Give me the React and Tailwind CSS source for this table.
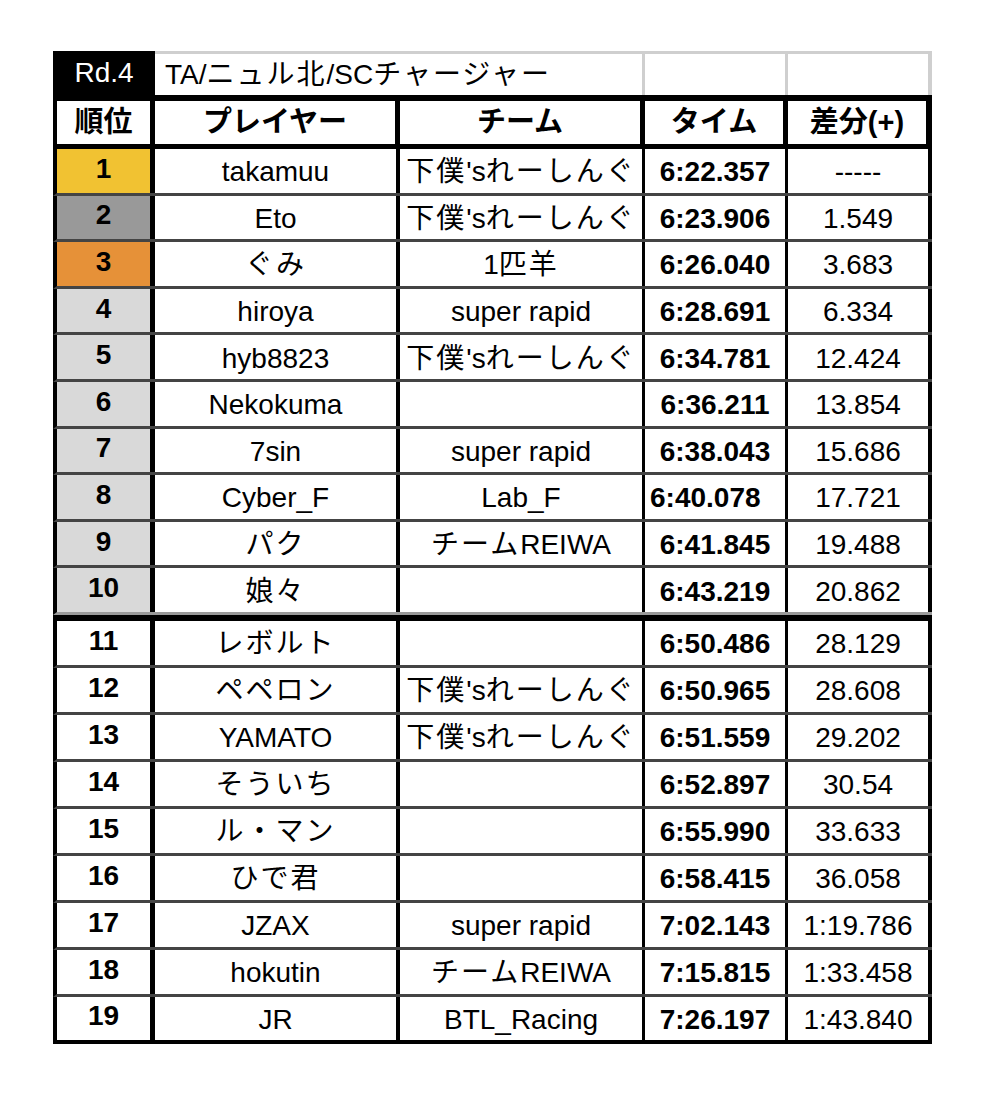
import React from 'react';

const TEAM_GEBOKU = "下僕'sれーしんぐ";

const rows = [
    { rank: 1, bg: 'bg-[#f1c232]', name: 'takamuu', team: TEAM_GEBOKU, time: '6:22.357', diff: '-----' },
    { rank: 2, bg: 'bg-[#999999]', name: 'Eto', team: TEAM_GEBOKU, time: '6:23.906', diff: '1.549' },
    { rank: 3, bg: 'bg-[#e69138]', name: 'ぐみ', team: '1匹羊', time: '6:26.040', diff: '3.683' },
    { rank: 4, bg: 'bg-[#d9d9d9]', name: 'hiroya', team: 'super rapid', time: '6:28.691', diff: '6.334' },
    { rank: 5, bg: 'bg-[#d9d9d9]', name: 'hyb8823', team: TEAM_GEBOKU, time: '6:34.781', diff: '12.424' },
    { rank: 6, bg: 'bg-[#d9d9d9]', name: 'Nekokuma', team: '', time: '6:36.211', diff: '13.854' },
    { rank: 7, bg: 'bg-[#d9d9d9]', name: '7sin', team: 'super rapid', time: '6:38.043', diff: '15.686' },
    { rank: 8, bg: 'bg-[#d9d9d9]', name: 'Cyber_F', team: 'Lab_F', time: '6:40.078', diff: '17.721', shifted: true },
    { rank: 9, bg: 'bg-[#d9d9d9]', name: 'パク', team: 'チームREIWA', time: '6:41.845', diff: '19.488' },
    { rank: 10, bg: 'bg-[#d9d9d9]', name: '娘々', team: '', time: '6:43.219', diff: '20.862' },
    { rank: 11, bg: 'bg-white', name: 'レボルト', team: '', time: '6:50.486', diff: '28.129' },
    { rank: 12, bg: 'bg-white', name: 'ペペロン', team: TEAM_GEBOKU, time: '6:50.965', diff: '28.608' },
    { rank: 13, bg: 'bg-white', name: 'YAMATO', team: TEAM_GEBOKU, time: '6:51.559', diff: '29.202' },
    { rank: 14, bg: 'bg-white', name: 'そういち', team: '', time: '6:52.897', diff: '30.54' },
    { rank: 15, bg: 'bg-white', name: 'ル・マン', team: '', time: '6:55.990', diff: '33.633' },
    { rank: 16, bg: 'bg-white', name: 'ひで君', team: '', time: '6:58.415', diff: '36.058' },
    { rank: 17, bg: 'bg-white', name: 'JZAX', team: 'super rapid', time: '7:02.143', diff: '1:19.786' },
    { rank: 18, bg: 'bg-white', name: 'hokutin', team: 'チームREIWA', time: '7:15.815', diff: '1:33.458' },
    { rank: 19, bg: 'bg-white', name: 'JR', team: 'BTL_Racing', time: '7:26.197', diff: '1:43.840' },
];

// kana/kanji runs are drawn a little wider than the latin text around them
const Mixed = ({ text }) => {
    const parts = text.match(/[\u3000-\u30ff\u4e00-\u9fff]+|[^\u3000-\u30ff\u4e00-\u9fff]+/g) || [];
    return (
        <>
            {parts.map((p, i) =>
                /[\u3000-\u30ff\u4e00-\u9fff]/.test(p)
                    ? <span key={i} className="tracking-[2px]">{p}</span>
                    : <span key={i}>{p}</span>
            )}
        </>
    );
};

const Row = ({ r }) => {
    let rowCls = 'h-[46.6px] border-b-[3px] border-b-[#444]';
    if (r.rank === 10) rowCls = 'h-[46.6px] border-b-[3px] border-b-[#9a9a9a]';
    if (r.rank === 11) rowCls = 'h-[53px] border-t-[6px] border-t-black border-b-[3px] border-b-[#444]';
    if (r.rank > 11) rowCls = 'h-[47px] border-b-[3px] border-b-[#444]';
    if (r.rank === 19) rowCls = 'h-[47px] border-b-[4px] border-b-black';

    return (
        <div className={`flex border-l-[4px] border-l-black ${rowCls}`}>
            <div className={`w-[98px] flex items-center justify-center pb-1 font-bold border-r-[5px] border-black ${r.bg}`}>
                {r.rank}
            </div>
            <div className="w-[245px] flex items-center justify-center pt-[3px] border-r-[4px] border-black whitespace-nowrap">
                <Mixed text={r.name} />
            </div>
            <div className="w-[245px] flex items-center justify-center pt-[3px] border-r-[3px] border-black whitespace-nowrap">
                <Mixed text={r.team} />
            </div>
            <div className={`w-[143px] flex items-center pt-[3px] font-bold border-r-[3px] border-black ${r.shifted ? 'justify-start pl-[5px]' : 'justify-center'}`}>
                {r.time}
            </div>
            <div className="w-[144px] flex items-center justify-center pt-[3px] border-r-[4px] border-black">
                {r.diff}
            </div>
        </div>
    );
};

const App = () => {
    return (
        <div
            className="min-h-screen bg-white text-black text-[28px] leading-none pt-[51px] pl-[53px]"
            style={{ fontFamily: '"Liberation Sans", "Noto Sans CJK JP", sans-serif' }}
        >
            <div className="w-[879px]">
                {/* title row */}
                <div className="flex h-[44px]">
                    <div className="w-[102px] bg-black text-white flex items-center justify-center">Rd.4</div>
                    <div className="w-[490px] flex items-center pl-[10px] border-t-[3px] border-r-[3px] border-[#cfcfcf] whitespace-nowrap">
                        <Mixed text="TA/ニュル北/SCチャージャー" />
                    </div>
                    <div className="w-[143px] border-t-[3px] border-r-[3px] border-[#cfcfcf]"></div>
                    <div className="w-[144px] border-t-[3px] border-r-[4px] border-[#cfcfcf]"></div>
                </div>

                {/* header row */}
                <div className="flex h-[54px] border-t-[6px] border-b-[5px] border-l-[4px] border-black font-bold text-[29px]">
                    <div className="w-[98px] flex items-center justify-center border-r-[5px] border-black">順位</div>
                    <div className="w-[245px] flex items-center justify-center border-r-[5px] border-black">プレイヤー</div>
                    <div className="w-[245px] flex items-center justify-center border-r-[5px] border-black">チーム</div>
                    <div className="w-[143px] flex items-center justify-center border-r-[5px] border-black">タイム</div>
                    <div className="w-[144px] flex items-center justify-center border-r-[6px] border-black">差分(+)</div>
                </div>

                {rows.map((r) => (
                    <Row key={r.rank} r={r} />
                ))}
            </div>
        </div>
    );
};

export default App;
